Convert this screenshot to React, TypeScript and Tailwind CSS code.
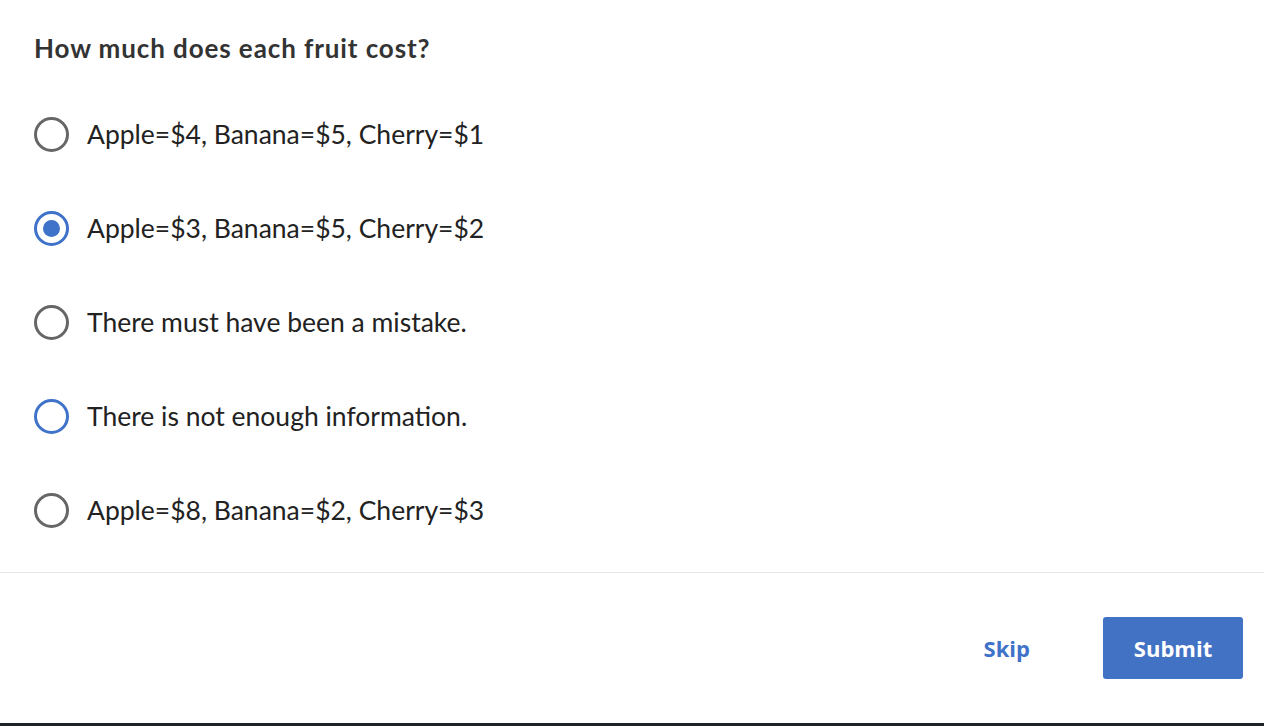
import { useState } from 'react';

const options = [
  'Apple=$4, Banana=$5, Cherry=$1',
  'Apple=$3, Banana=$5, Cherry=$2',
  'There must have been a mistake.',
  'There is not enough information.',
  'Apple=$8, Banana=$2, Cherry=$3',
];

function Radio({ checked, focused }: { checked: boolean; focused: boolean }) {
  const border = checked || focused ? 'border-[#3f72c9]' : 'border-[#666666]';
  return (
    <span
      className={`flex h-[35px] w-[35px] shrink-0 items-center justify-center rounded-full border-[3px] ${border}`}
    >
      {checked && <span className="h-[17px] w-[17px] rounded-full bg-[#3f72c9]" />}
    </span>
  );
}

export default function App() {
  const [selected, setSelected] = useState(1);
  const focused = 3;

  return (
    <div className="flex h-[726px] w-[1264px] flex-col bg-white font-['Lato',sans-serif] text-[#222222]">
      <div className="flex flex-1 flex-col px-[34px] pt-[30px]">
        <h1 className="text-[26px] font-bold leading-[36px] tracking-[0.9px] text-[#333333]">
          How much does each fruit cost?
        </h1>
        <div className="mt-[50px] flex flex-col gap-[58px]">
          {options.map((option, index) => (
            <label
              className="flex h-[36px] cursor-pointer items-center gap-[18px]"
              key={option}
              onClick={() => setSelected(index)}
            >
              <Radio checked={selected === index} focused={focused === index} />
              <span className="text-[26.5px] leading-[36px]">{option}</span>
            </label>
          ))}
        </div>
      </div>
      <div className="flex h-[151px] items-center justify-end gap-[73px] border-t border-[#e6e6e6] pr-[21px] font-['Open_Sans',sans-serif]">
        <button className="text-[22px] font-bold text-[#3f72c9]" type="button">
          Skip
        </button>
        <button
          className="h-[62px] w-[140px] rounded-[3px] bg-[#4272c4] text-[22px] font-bold text-white"
          type="button"
        >
          Submit
        </button>
      </div>
      <div className="h-[3px] bg-[#1f2226]" />
    </div>
  );
}
